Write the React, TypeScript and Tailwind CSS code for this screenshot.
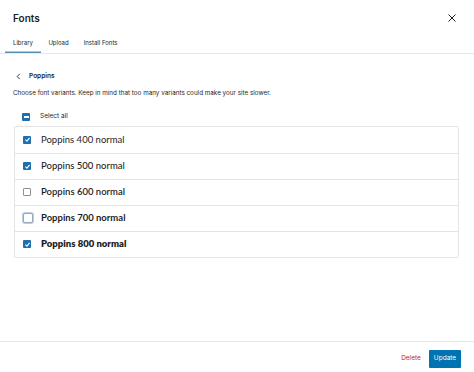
import React from "react";

const ui = { fontFamily: "Inter, 'Liberation Sans', sans-serif" };
const pop = { fontFamily: "Lato, 'Open Sans', 'Liberation Sans', sans-serif" };

function Check({ state }: { state: "on" | "off" | "focus" | "mixed" }) {
  if (state === "on")
    return (
      <span className="flex h-[8px] w-[8px] items-center justify-center rounded-[1px] bg-[#1e6fb0]">
        <svg width="7" height="7" viewBox="0 0 10 10">
          <path d="M2 5.2 L4.2 7.3 L8 2.8" stroke="white" strokeWidth="1.6" fill="none" />
        </svg>
      </span>
    );
  if (state === "mixed")
    return (
      <span className="flex h-[8px] w-[8px] items-center justify-center rounded-[1px] bg-[#1e6fb0]">
        <span className="h-[1.3px] w-[5px] bg-white" />
      </span>
    );
  if (state === "focus")
    return (
      <span className="h-[10px] w-[10px] rounded-[2px] border border-[#9aa8b8] ring-1 ring-[#b9cde3] ring-offset-0 bg-white" />
    );
  return <span className="h-[8px] w-[8px] rounded-[1px] border border-[#8c8f94] bg-white" />;
}

const rows: { w: number; label: string; s: "on" | "off" | "focus" }[] = [
  { w: 400, label: "Poppins 400 normal", s: "on" },
  { w: 500, label: "Poppins 500 normal", s: "on" },
  { w: 600, label: "Poppins 600 normal", s: "off" },
  { w: 700, label: "Poppins 700 normal", s: "focus" },
  { w: 800, label: "Poppins 800 normal", s: "on" },
];

export default function App() {
  return (
    <div className="flex h-[372px] w-[474px] flex-col bg-white text-[#1e1e1e]" style={ui}>
      <div className="flex h-[33px] items-center justify-between pl-[13px] pr-[17px] pt-[3px]">
        <span className="text-[10px] font-semibold">Fonts</span>
        <svg width="10" height="10" viewBox="0 0 10 10">
          <path d="M1.5 1.5 L8.5 8.5 M8.5 1.5 L1.5 8.5" stroke="#1e1e1e" strokeWidth="1" />
        </svg>
      </div>
      <div className="flex h-[21px] items-stretch border-b border-[#e8e8e8] pl-[5px] text-[6px]">
        <div className="flex items-center px-[8px] pb-[1px] shadow-[inset_0_-1.5px_0_#5b8fb5]">Library</div>
        <div className="flex items-center px-[7.5px] pb-[1px]">Upload</div>
        <div className="flex items-center px-[7.5px] pb-[1px]">Install Fonts</div>
      </div>
      <div className="flex flex-1 flex-col px-[13px]">
        <div className="mt-[18px] flex items-center gap-[8px] pl-[3px] text-[6.5px] font-semibold">
          <svg width="5" height="7" viewBox="0 0 5 7">
            <path d="M3.8 0.8 L1.2 3.5 L3.8 6.2" stroke="#1e1e1e" strokeWidth="0.9" fill="none" />
          </svg>
          <span>Poppins</span>
        </div>
        <div className="mt-[7px] text-[6.3px] text-[#1e1e1e]">
          Choose font variants. Keep in mind that too many variants could make your site slower.
        </div>
        <div className="mt-[14px] flex items-center gap-[10px] pl-[9px] text-[6.5px]">
          <Check state="mixed" />
          <span>Select all</span>
        </div>
        <div className="mt-[4px] mr-[2px] ml-[1px] flex flex-col rounded-[2px] border border-[#e4e4e4]">
          {rows.map((r, i) => (
            <div
              key={r.w}
              className={`flex h-[26px] items-center pl-[8px] ${i > 0 ? "border-t border-[#e4e4e4]" : ""}`}
            >
              <span className="flex w-[18px] items-center">
                <Check state={r.s} />
              </span>
              <span className="text-[9.5px] text-[#1e1e1e]" style={{ ...pop, fontWeight: r.w }}>
                {r.label}
              </span>
            </div>
          ))}
        </div>
      </div>
      <div className="flex h-[31px] items-center justify-end gap-[3px] border-t border-[#e8e8e8] pr-[13px] pt-[4px]">
        <button className="flex h-[18px] w-[30px] items-center justify-center text-[6.5px] text-[#cc1818]">Delete</button>
        <button className="flex h-[18px] w-[32px] items-center justify-center rounded-[1px] bg-[#0073b1] text-[6.5px] text-white">Update</button>
      </div>
    </div>
  );
}
